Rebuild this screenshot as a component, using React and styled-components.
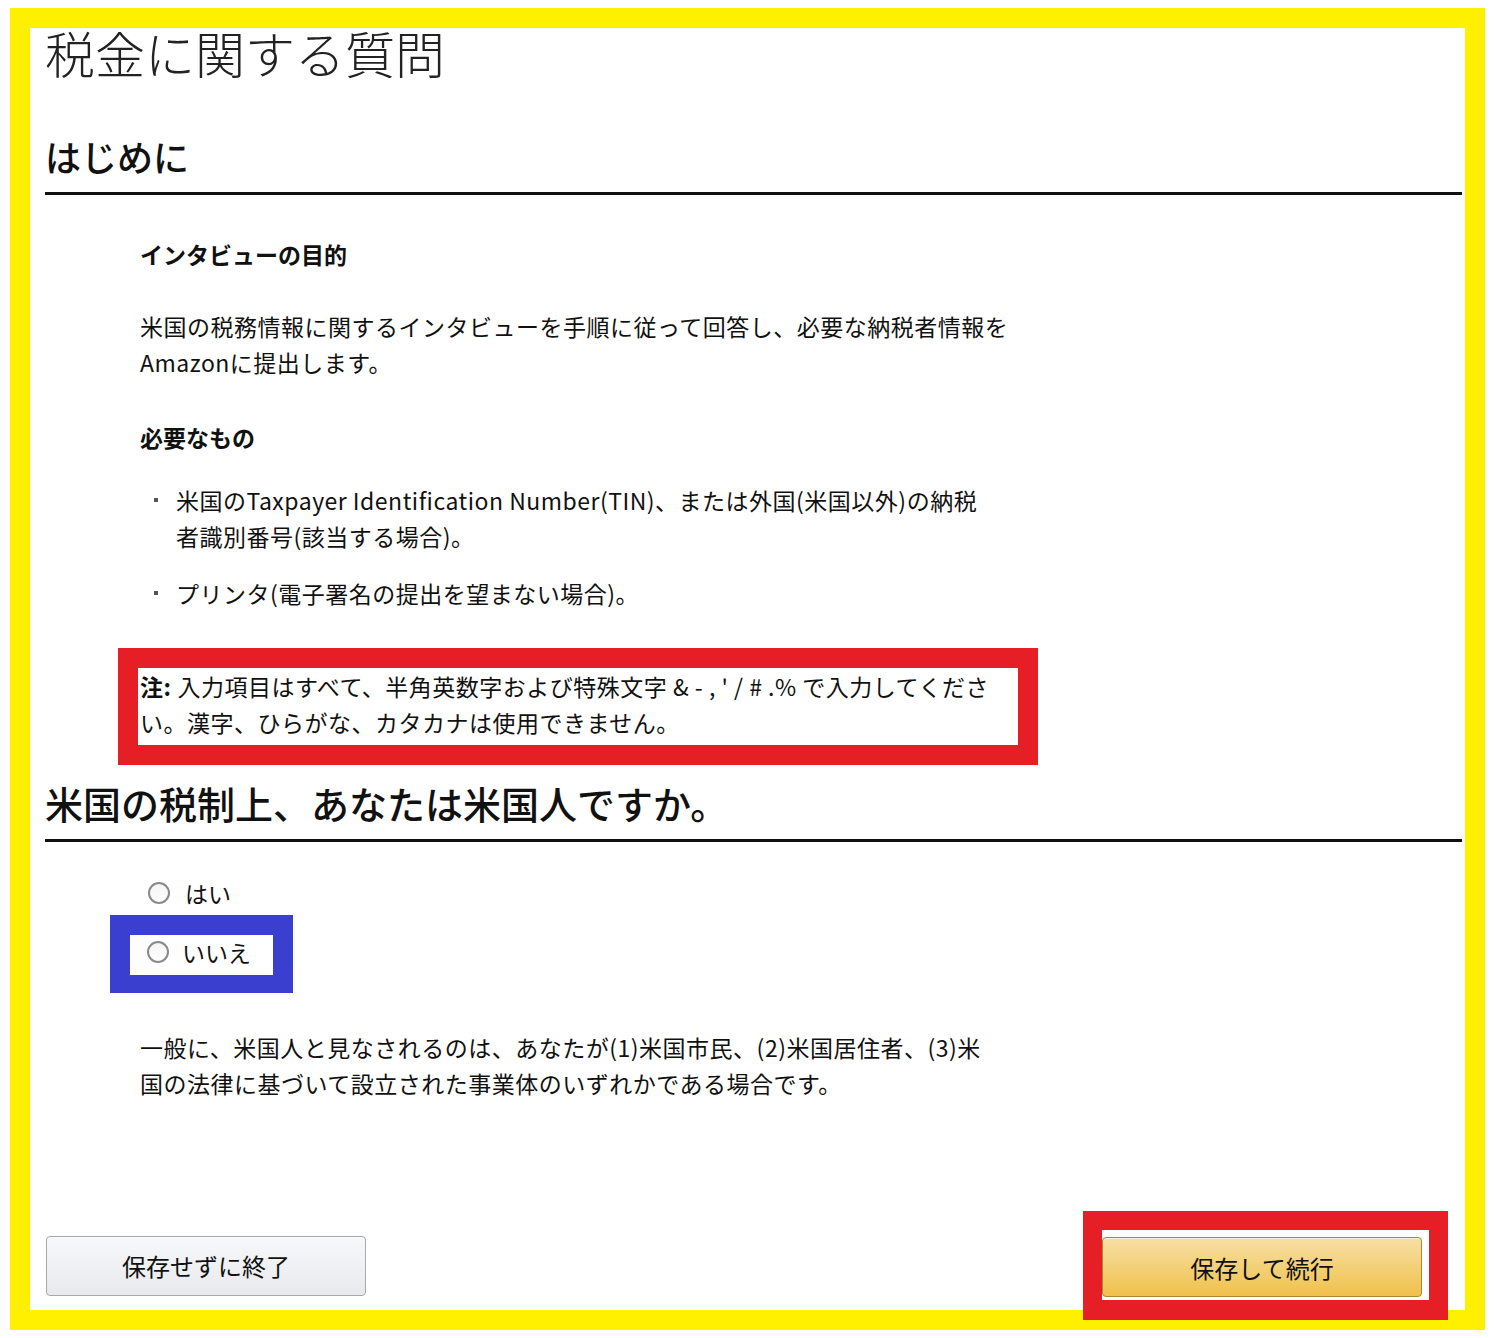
import React, { useState } from "react";
import styled, { createGlobalStyle } from "styled-components";

const GlobalStyle = createGlobalStyle`
  body {
    margin: 0;
    background: #ffffff;
    font-family: "Noto Sans CJK JP", "Noto Sans", sans-serif;
    color: #111111;
  }
`;

const Page = styled.div`
  padding: 8px 0 8px 10px;
`;

const Frame = styled.div`
  box-sizing: border-box;
  width: 1475px;
  height: 1322px;
  border: 20px solid #fff000;
  background: #ffffff;
  padding: 0 3px 0 15px;
  display: flex;
  flex-direction: column;
`;

const Title = styled.h1`
  margin: 0;
  font-size: 50px;
  font-weight: 300;
  line-height: 48px;
  color: #222222;
`;

const SectionHeading = styled.h2`
  margin: ${(props) => props.$top}px 0 0;
  font-size: ${(props) => props.$size}px;
  font-weight: 500;
  line-height: ${(props) => props.$lh}px;
  padding-bottom: ${(props) => props.$pad}px;
  border-bottom: 3px solid #111111;
`;

const Body = styled.div`
  margin-left: 95px;
  width: 900px;
  font-size: 23px;
  letter-spacing: 0.5px;
`;

const SubHead = styled.h3`
  margin: ${(props) => props.$top}px 0 0;
  font-size: 23px;
  font-weight: 700;
  line-height: 34px;
  letter-spacing: 0;
`;

const Para = styled.p`
  margin: ${(props) => props.$top}px 0 0;
  line-height: 36px;
`;

const List = styled.ul`
  margin: 28px 0 0;
  padding: 0;
  list-style: none;
`;

const Item = styled.li`
  display: flex;
  line-height: 36px;
  & + & {
    margin-top: 21px;
  }
`;

const Dot = styled.span`
  flex: 0 0 36px;
  display: flex;
  align-items: flex-start;
  padding-top: 16px;
  box-sizing: border-box;

  &::before {
    content: "";
    width: 4px;
    height: 4px;
    margin-left: 14px;
    background: #555555;
  }
`;

const NoteBox = styled.div`
  box-sizing: border-box;
  width: 920px;
  margin: 37px 0 0 -22px;
  border: 20px solid #e61e25;
  padding: 0 2px 5px;
  line-height: 36px;
`;

const Strong = styled.b`
  font-weight: 700;
  margin-right: 6px;
`;

const RadioGroup = styled.div`
  margin: 33px 0 0 65px;
  display: flex;
  flex-direction: column;
  align-items: flex-start;
`;

const RadioRow = styled.label`
  display: flex;
  align-items: center;
  height: 36px;
  padding-left: 38px;
  font-size: 23px;
  gap: 15px;
`;

const Highlight = styled.div`
  box-sizing: border-box;
  width: 183px;
  margin-top: 4px;
  border: 20px solid #3b3fcf;
  border-bottom-width: 18px;
  background: #ffffff;
  ${RadioRow} {
    height: 40px;
    padding: 0 0 6px 17px;
    box-sizing: border-box;
    gap: 13px;
  }
`;

const Radio = styled.input.attrs({ type: "radio" })`
  appearance: none;
  margin: 0;
  width: 22px;
  height: 22px;
  border: 2px solid #8a8a8a;
  border-radius: 50%;
  background: linear-gradient(#f4f4f4, #ffffff);
  box-sizing: border-box;

  &:checked {
    background: radial-gradient(circle, #333 0 4px, #fff 5px);
  }
`;

const Footer = styled.div`
  margin: auto -3px -10px 1px;
  padding-right: 17px;
  display: flex;
  justify-content: space-between;
  align-items: center;
`;

const Button = styled.button`
  width: 320px;
  height: 60px;
  border-radius: 4px;
  font-family: inherit;
  font-size: 24px;
  color: #111111;
  cursor: pointer;
  border: 1px solid ${(props) => (props.$primary ? "#a88734" : "#a6a9ad")};
  background: ${(props) =>
    props.$primary
      ? "linear-gradient(#f7dfa5, #f0c14b)"
      : "linear-gradient(#f7f8fa, #e7e9ec)"};
  box-shadow: 0 1px 0 rgba(255, 255, 255, 0.6) inset;
`;

const RedMark = styled.div`
  border: 19px solid #e61e25;
  border-bottom-width: 20px;
  padding: 7px 7px 3px 0;
  background: #ffffff;
  display: flex;
`;

const App = () => {
  const [usPerson, setUsPerson] = useState("");

  return (
    <Page>
      <GlobalStyle />
      <Frame>
        <Title>税金に関する質問</Title>
        <SectionHeading $top={60} $size={36} $lh={40} $pad={16}>
          はじめに
        </SectionHeading>

        <Body>
          <SubHead $top={42}>インタビューの目的</SubHead>
          <Para $top={37}>
            米国の税務情報に関するインタビューを手順に従って回答し、必要な納税者情報を
            <br />
            Amazonに提出します。
          </Para>

          <SubHead $top={40}>必要なもの</SubHead>
          <List>
            <Item>
              <Dot />
              <span>
                米国のTaxpayer Identification Number(TIN)、または外国(米国以外)の納税
                <br />
                者識別番号(該当する場合)。
              </span>
            </Item>
            <Item>
              <Dot />
              <span>プリンタ(電子署名の提出を望まない場合)。</span>
            </Item>
          </List>

          <NoteBox>
            <Strong>注:</Strong>入力項目はすべて、半角英数字および特殊文字 &amp; - , ' / # .%
            で入力してくださ
            <br />
            い。漢字、ひらがな、カタカナは使用できません。
          </NoteBox>
        </Body>

        <SectionHeading $top={16} $size={38} $lh={44} $pad={14}>
          米国の税制上、あなたは米国人ですか。
        </SectionHeading>

        <RadioGroup>
          <RadioRow>
            <Radio
              name="usPerson"
              checked={usPerson === "yes"}
              onChange={() => setUsPerson("yes")}
            />
            はい
          </RadioRow>
          <Highlight>
            <RadioRow>
              <Radio
                name="usPerson"
                checked={usPerson === "no"}
                onChange={() => setUsPerson("no")}
              />
              いいえ
            </RadioRow>
          </Highlight>
        </RadioGroup>

        <Body>
          <Para $top={36}>
            一般に、米国人と見なされるのは、あなたが(1)米国市民、(2)米国居住者、(3)米
            <br />
            国の法律に基づいて設立された事業体のいずれかである場合です。
          </Para>
        </Body>

        <Footer>
          <Button>保存せずに終了</Button>
          <RedMark>
            <Button $primary>保存して続行</Button>
          </RedMark>
        </Footer>
      </Frame>
    </Page>
  );
};

export default App;
